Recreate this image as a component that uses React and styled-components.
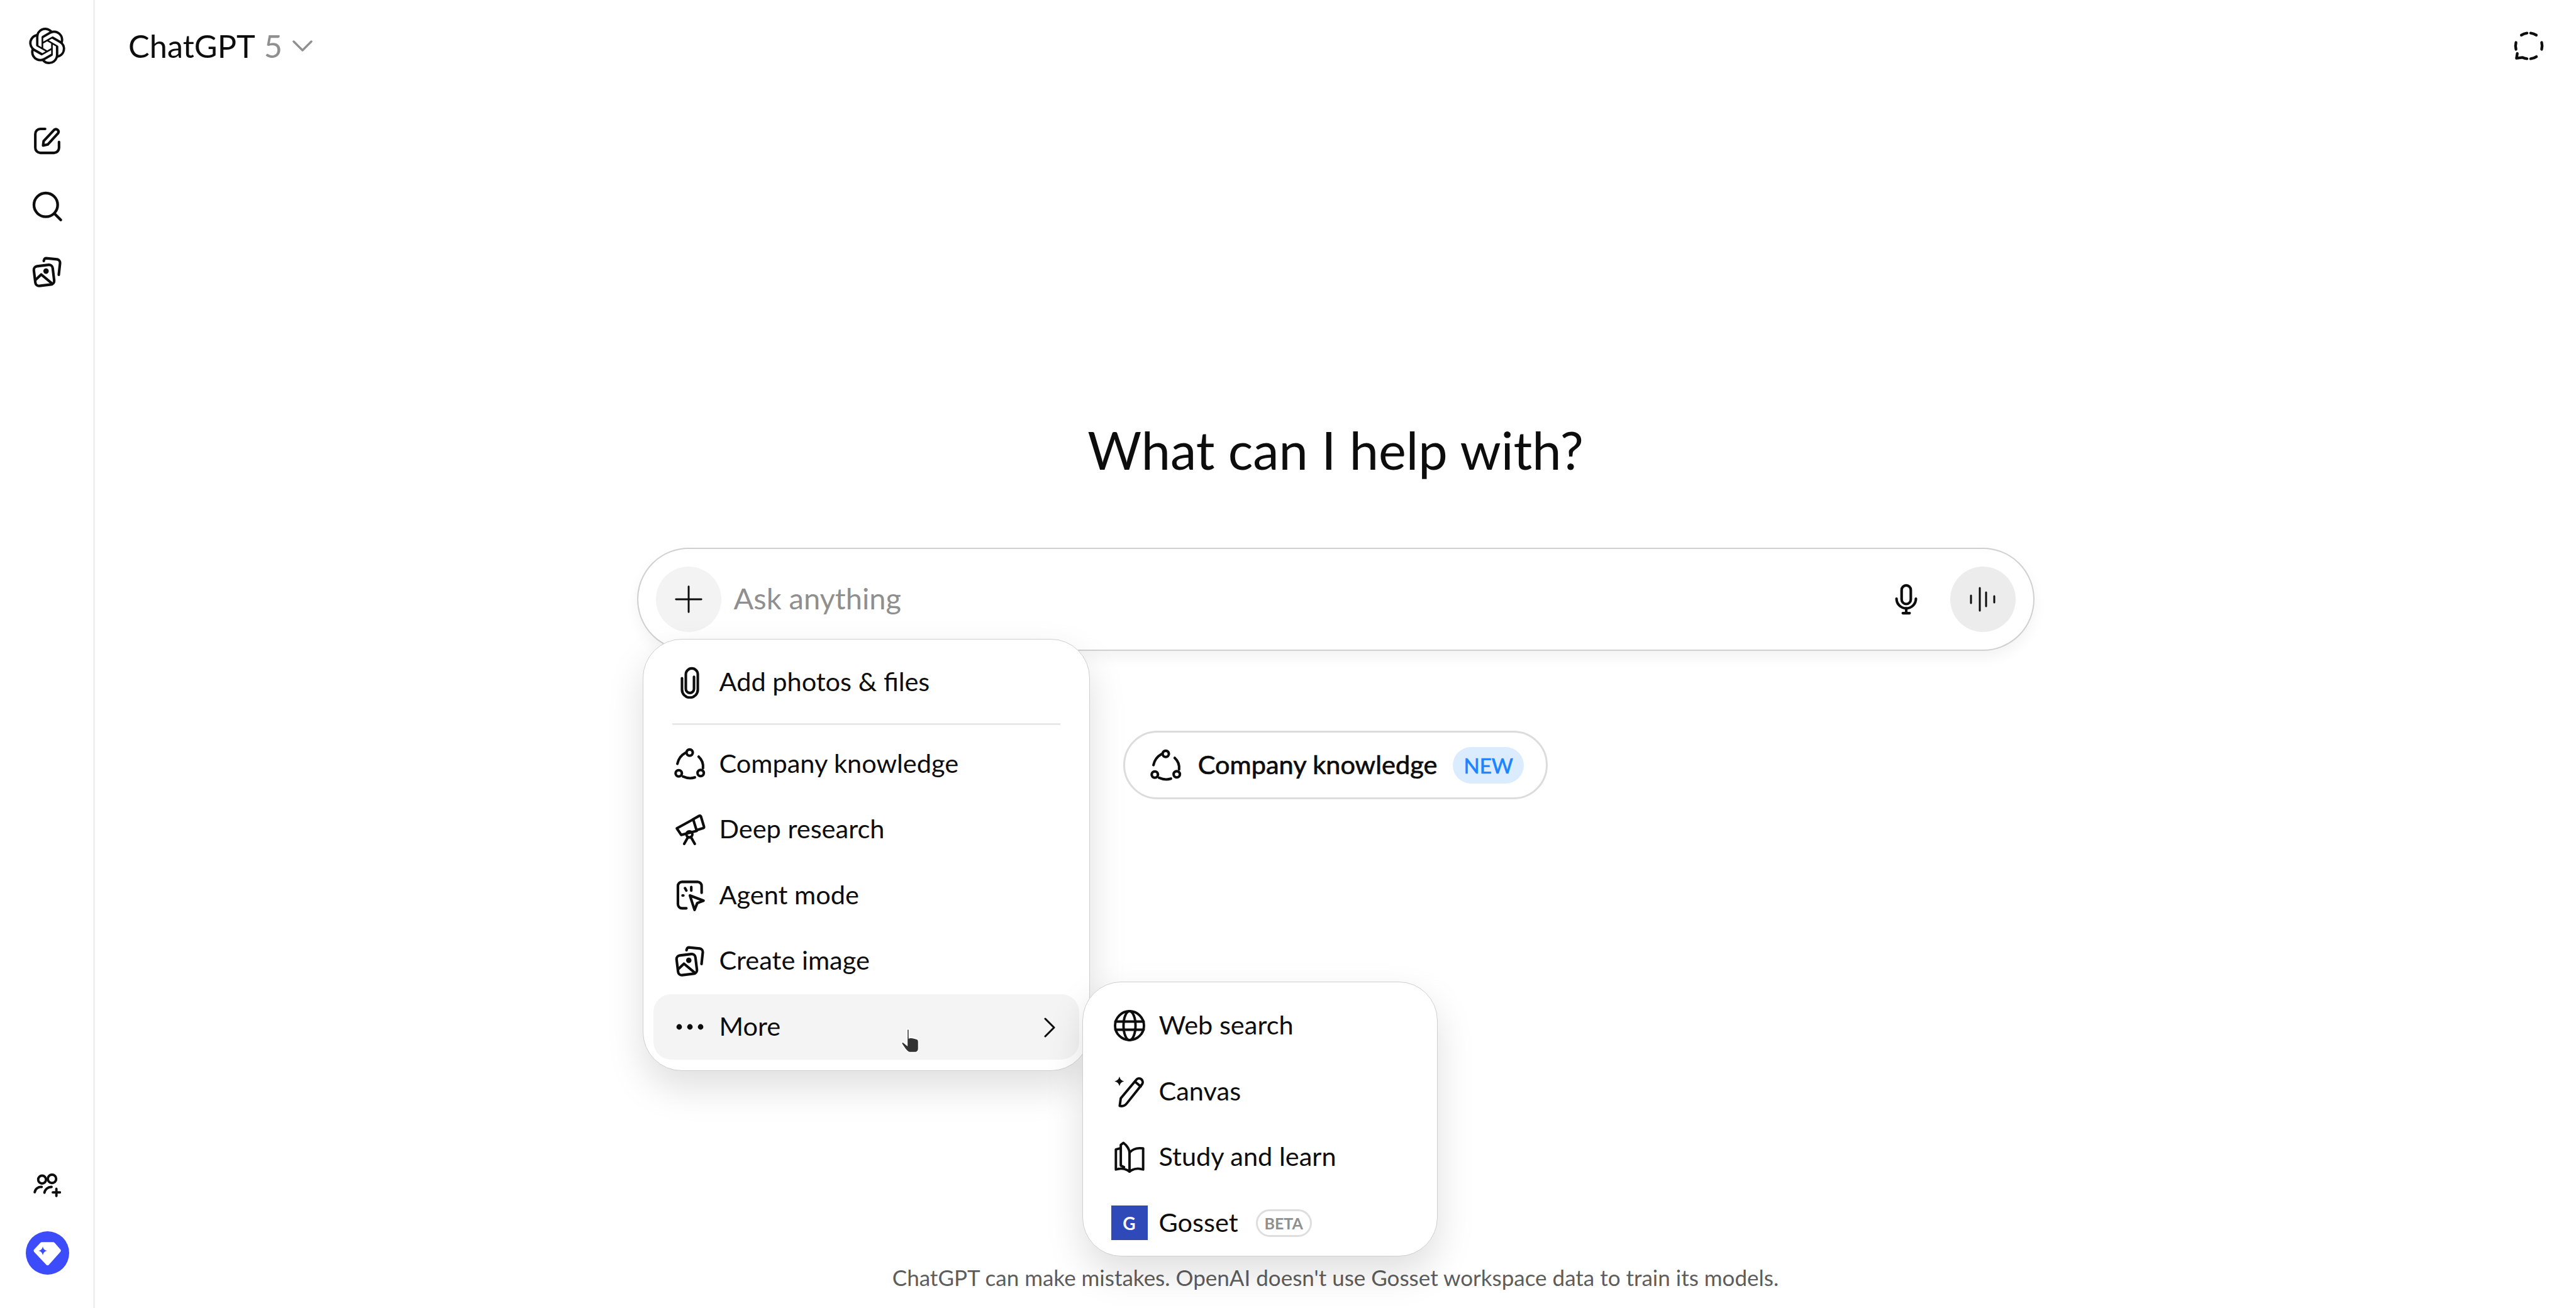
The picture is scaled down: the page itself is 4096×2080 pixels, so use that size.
import React from 'react';
import styled, { createGlobalStyle } from 'styled-components';
import { SiOpenai } from 'react-icons/si';

const GlobalStyle = createGlobalStyle`
  html, body { margin: 0; padding: 0; background: #fff; }
  * { box-sizing: border-box; }
  body { font-family: "Lato", "Noto Sans", sans-serif; color: #0d0d0d; }
`;

const Page = styled.div`
  display: flex;
  width: 4096px;
  height: 2080px;
  overflow: hidden;
  background: #fff;
`;

const Sidebar = styled.aside`
  display: flex;
  flex-direction: column;
  align-items: center;
  width: 151px;
  flex-shrink: 0;
  border-right: 3px solid #f0f0f0;
  padding: 0 0 53px 2px;
`;

const LogoRow = styled.div`
  display: flex;
  align-items: center;
  justify-content: center;
  height: 146px;
  margin-bottom: 26px;
`;

const NavButton = styled.div`
  display: flex;
  align-items: center;
  justify-content: center;
  width: 104px;
  height: 104px;
`;

const SidebarBottom = styled.div`
  display: flex;
  flex-direction: column;
  align-items: center;
  gap: 50px;
  margin-top: auto;
`;

const Main = styled.main`
  display: flex;
  flex-direction: column;
  flex: 1;
  min-width: 0;
`;

const Header = styled.header`
  display: flex;
  align-items: center;
  justify-content: space-between;
  height: 146px;
  padding: 0 50px 0 53px;
  flex-shrink: 0;
`;

const ModelButton = styled.div`
  display: flex;
  align-items: center;
  font-size: 50.5px;
  line-height: 60px;
`;

const ModelVersion = styled.span`
  color: #8f8f8f;
  margin-left: 14px;
`;

const Chevron = styled.svg`
  margin-left: 16px;
  color: #8f8f8f;
`;

const Center = styled.section`
  display: flex;
  flex-direction: column;
  align-items: center;
  flex: 1;
  padding-top: 519px;
`;

const Heading = styled.h1`
  margin: 0 0 106px;
  font-size: 83px;
  line-height: 100px;
  font-weight: 400;
`;

const Composer = styled.div`
  position: relative;
  display: flex;
  align-items: center;
  width: 2222px;
  height: 164px;
  padding: 0 28px;
  border: 2px solid #d0d0d0;
  border-radius: 82px;
  background: #fff;
  box-shadow: 0 10px 22px rgba(0, 0, 0, 0.05);
`;

const RoundButton = styled.div`
  display: flex;
  align-items: center;
  justify-content: center;
  width: 104px;
  height: 104px;
  border-radius: 50%;
  flex-shrink: 0;
  background: ${(p) => p.$bg};
`;

const Placeholder = styled.div`
  flex: 1;
  margin-left: 20px;
  padding-bottom: 4px;
  font-size: 47px;
  color: #8f8f8f;
`;

const MicSlot = styled.div`
  display: flex;
  justify-content: center;
  width: 52px;
  margin-right: 44px;
`;

const Menu = styled.div`
  position: absolute;
  left: 7px;
  top: 143px;
  z-index: 3;
  width: 711px;
  height: 687px;
  padding: 16px 16px 16px;
  border: 1.5px solid #cfcfcf;
  border-radius: 62px;
  background: #fff;
  box-shadow: 0 26px 60px rgba(0, 0, 0, 0.13);
`;

const SubMenu = styled(Menu)`
  left: 698px;
  top: 544px;
  z-index: 4;
  width: 565px;
  height: 437px;
  padding: 17px 16px;
`;

const MenuRow = styled.div`
  position: relative;
  display: flex;
  align-items: center;
  gap: 21px;
  height: 104.5px;
  padding-left: 32px;
  padding-bottom: 4px;
  border-radius: 28px;
  font-size: 41.5px;
  background: ${(p) => (p.$active ? '#f4f4f4' : 'transparent')};
`;

const IconBox = styled.span`
  display: flex;
  align-items: center;
  justify-content: center;
  width: 52px;
  height: 52px;
  margin-top: 4px;
  flex-shrink: 0;
`;

const Divider = styled.div`
  height: 3px;
  margin: 12px 30px 10px;
  background: #e8e8e8;
`;

const RowArrow = styled.svg`
  position: absolute;
  right: 36px;
  top: 37px;
`;

const HandCursor = styled.svg`
  position: absolute;
  left: 392px;
  top: 54px;
`;

const GossetMark = styled.span`
  display: flex;
  align-items: center;
  justify-content: center;
  width: 58px;
  height: 55px;
  margin: 0 -3px;
  flex-shrink: 0;
  background: #2f4ab8;
  color: #fff;
  font-size: 28px;
  font-weight: 700;
`;

const BetaTag = styled.span`
  display: flex;
  align-items: center;
  justify-content: center;
  width: 89px;
  height: 44px;
  margin-left: 7px;
  margin-top: 4px;
  border: 3px solid #dedede;
  border-radius: 22px;
  color: #8f8f8f;
  font-size: 25px;
  font-weight: 700;
`;

const Chip = styled.div`
  display: flex;
  align-items: center;
  height: 109px;
  margin-top: 127px;
  padding: 0 35px 0 39px;
  border: 3px solid #dcdcdc;
  border-radius: 55px;
  font-size: 41.5px;
  -webkit-text-stroke: 0.7px currentColor;
`;

const ChipLabel = styled.span`
  margin-left: 25px;
  padding-bottom: 4px;
`;

const NewBadge = styled.span`
  display: flex;
  align-items: center;
  justify-content: center;
  width: 113px;
  height: 58px;
  margin-left: 25px;
  border-radius: 29px;
  background: #dbecff;
  color: #1a85ff;
  font-size: 33px;
`;

const Footer = styled.footer`
  height: 69px;
  padding-bottom: 29px;
  font-size: 35px;
  line-height: 40px;
  color: #5d5d5d;
  text-align: center;
  flex-shrink: 0;
`;

const Line = styled.svg`
  display: block;
  fill: none;
  stroke: currentColor;
  stroke-width: ${(p) => p.$w || 2};
  stroke-linecap: round;
  stroke-linejoin: round;
  flex-shrink: 0;
`;

const Stroke = ({ size = 52, w, box = 24, children }) => (
  <Line width={size} height={size} viewBox={`0 0 ${box} ${box}`} $w={w}>
    {children}
  </Line>
);

const EditIcon = () => (
  <Stroke size={52} w={1.9}>
    <path d="M10.5 3.2H7A3.7 3.7 0 0 0 3.3 7v10A3.7 3.7 0 0 0 7 20.8h10a3.7 3.7 0 0 0 3.7-3.7v-4.3" />
    <path d="M9 15.4l.4-3.2 7.8-8.3a1.9 1.9 0 0 1 2.8 2.5l-7.6 8.3z" />
  </Stroke>
);

const SearchIcon = () => (
  <Stroke size={52} w={2}>
    <circle cx="11" cy="11" r="8.7" />
    <path d="M17.4 17.4L22 22" />
  </Stroke>
);

const ImagesIcon = ({ size = 54 }) => (
  <Stroke size={size} w={1.85}>
    <path d="M9.6 4.4l.2-.7a1.6 1.6 0 0 1 1.5-1.2l7.7.8a2.5 2.5 0 0 1 2.1 2.7l-.9 8.2" />
    <rect x="3" y="7.6" width="13.4" height="14" rx="2.6" transform="rotate(-7 10 14)" />
    <circle cx="11.2" cy="11.6" r="1" fill="currentColor" />
    <path d="M3.6 18l4.2-4 7.4 6.2" />
  </Stroke>
);

const PeoplePlusIcon = () => (
  <Stroke size={44} w={2.1}>
    <circle cx="7.6" cy="6.4" r="3.4" />
    <circle cx="16.2" cy="5.8" r="3.6" />
    <path d="M1.2 17.4a5.5 5.5 0 0 1 6-4.6" />
    <path d="M9.6 17.8a6 6 0 0 1 6.2-5" />
    <path d="M20 14.4v6.2M16.9 17.5h6.2" />
  </Stroke>
);

const DiamondBadge = () => (
  <svg width="69" height="69" viewBox="0 0 24 24">
    <circle cx="12" cy="12" r="12" fill="#3d4cfb" />
    <path
      d="M9 6h6.1q.5 0 .9.4l3.2 3.7q.5.6 0 1.2l-6.5 7.3q-.7.5-1.3 0L4.6 11.4q-.6-.7 0-1.3L8 6.4Q8.4 6 9 6z"
      fill="#fff"
    />
    <path d="M9.4 8.4q.4 2 2.4 2.4q-2 .4-2.4 2.4q-.4-2-2.4-2.4q2-.4 2.4-2.4z" fill="#3d4cfb" />
  </svg>
);

const ChatDashIcon = () => (
  <Stroke size={50} w={2.1}>
    <path d="M10.6 2.2a10 10 0 0 0-4.3 1.6" />
    <path d="M13.4 2.2a10 10 0 0 1 4.3 1.6" />
    <path d="M21.8 9.4a10 10 0 0 1 0 5.2" />
    <path d="M17.8 20.2a10 10 0 0 1-4.4 1.6" />
    <path d="M2.2 9.4a10 10 0 0 0 0 5.2" />
    <path d="M10.6 21.8a10 10 0 0 1-3.6-1L2.6 21.4l.6-3.6" />
  </Stroke>
);

const PlusIcon = () => (
  <Stroke size={44} w={1.6}>
    <path d="M12 1v22M1 12h22" />
  </Stroke>
);

const MicIcon = () => (
  <Stroke size={50} w={2}>
    <rect x="8.5" y="1.4" width="7" height="14.2" rx="3.5" />
    <path d="M4.6 11.5a7.4 7.4 0 0 0 14.8 0" />
    <path d="M12 19v3.4M9.4 22.6h5.2" />
  </Stroke>
);

const WaveIcon = () => (
  <Stroke size={48} w={3} box={48}>
    <path d="M5 18v12M19 6v36M29 13v22M42 19v10" />
  </Stroke>
);

const ClipIcon = () => (
  <Stroke size={52} w={1.9}>
    <path d="M6.2 9v8.4a5.8 5.8 0 0 0 11.6 0V6.2a4.4 4.4 0 0 0-8.8 0v10.6a3 3 0 0 0 6 0V8" />
  </Stroke>
);

const KnowledgeIcon = () => (
  <Stroke size={52} w={1.9}>
    <circle cx="11.8" cy="3.6" r="2.3" />
    <circle cx="3.8" cy="18.8" r="2.3" />
    <circle cx="19.9" cy="18.6" r="2.3" />
    <path d="M8.6 3.8a12 12 0 0 0-5.8 8" />
    <path d="M18.4 6.6a10 10 0 0 1 3.2 8.4" />
    <path d="M7 21.2q4.5 2 8.6.6" />
  </Stroke>
);

const TelescopeIcon = () => (
  <Stroke size={52} w={1.9}>
    <path d="M2.4 11.2l12-6.6 2.6 8.4-11.4 3-3.2-4.8z" />
    <path d="M14.2 4.6l4.6-2.6a1 1 0 0 1 1.3.5l2.2 7.4a1 1 0 0 1-.7 1.2l-4.6 1.4" />
    <circle cx="11.6" cy="15.6" r="2.2" />
    <path d="M10.6 17.6l-2.8 5M12.8 17.6l2.8 5" />
  </Stroke>
);

const AgentIcon = () => (
  <Stroke size={52} w={1.9}>
    <path d="M9.4 21.4H6.2a3 3 0 0 1-3-3V5a3 3 0 0 1 3-3h11.4a3 3 0 0 1 3 3v5" />
    <path d="M12 12l10 3.8-4.6 1.8-2 5z" />
    <path d="M8.4 6.6l1 1.8M13 5.8v2.6M6.6 12h.6" />
  </Stroke>
);

const DotsIcon = () => (
  <svg width="44" height="10" viewBox="0 0 44 10" fill="currentColor">
    <circle cx="5" cy="5" r="4.4" />
    <circle cx="22" cy="5" r="4.4" />
    <circle cx="39" cy="5" r="4.4" />
  </svg>
);

const GlobeIcon = () => (
  <Stroke size={52} w={1.8}>
    <circle cx="12" cy="12" r="10.6" />
    <path d="M1.6 9h20.8M1.6 15h20.8" />
    <ellipse cx="12" cy="12" rx="4.4" ry="10.6" />
  </Stroke>
);

const CanvasIcon = () => (
  <Stroke size={52} w={1.8}>
    <path d="M4.8 22.4l.8-5.6L17 3.2a2.6 2.6 0 0 1 3.8-.2 2.8 2.8 0 0 1 .4 3.6L10 20.6a5 5 0 0 1-5.2 1.8z" />
    <path d="M16 4.6l4.2 3.6" />
    <path d="M4.6.8q.6 3 3.4 3.6q-2.8.6-3.4 3.6Q4 5 1 4.4Q4 3.8 4.6.8z" fill="currentColor" stroke="none" />
  </Stroke>
);

const BookIcon = () => (
  <Stroke size={52} w={1.8}>
    <path d="M12 22.6l-1.6-1a10 10 0 0 0-7-.8l-1.4.3V6.4l2.6-.7" />
    <path d="M12 22.6l1.6-1a10 10 0 0 1 7-.8l1.4.3V5.6l-2-.1a10 10 0 0 0-8 3.2" />
    <path d="M12 22.6V8.8c0-2-1.6-5.2-4.4-7.2l-2 1.4v15.2l2.4 1.2" />
  </Stroke>
);

const primaryItems = [
  { label: 'Company knowledge', icon: <KnowledgeIcon /> },
  { label: 'Deep research', icon: <TelescopeIcon /> },
  { label: 'Agent mode', icon: <AgentIcon /> },
  { label: 'Create image', icon: <ImagesIcon /> },
];

const moreItems = [
  { label: 'Web search', icon: <GlobeIcon /> },
  { label: 'Canvas', icon: <CanvasIcon /> },
  { label: 'Study and learn', icon: <BookIcon /> },
];

const App = () => {
  return (
    <Page>
      <GlobalStyle />
      <Sidebar>
        <LogoRow>
          <SiOpenai size={58} />
        </LogoRow>
        <NavButton><EditIcon /></NavButton>
        <NavButton><SearchIcon /></NavButton>
        <NavButton><ImagesIcon /></NavButton>
        <SidebarBottom>
          <PeoplePlusIcon />
          <DiamondBadge />
        </SidebarBottom>
      </Sidebar>
      <Main>
        <Header>
          <ModelButton>
            ChatGPT<ModelVersion>5</ModelVersion>
            <Chevron width="32" height="18" viewBox="0 0 32 18" fill="none" stroke="currentColor" strokeWidth="3.4" strokeLinecap="round" strokeLinejoin="round">
              <path d="M2 2l14 14L30 2" />
            </Chevron>
          </ModelButton>
          <ChatDashIcon />
        </Header>
        <Center>
          <Heading>What can I help with?</Heading>
          <Composer>
            <RoundButton $bg="#f3f3f3"><PlusIcon /></RoundButton>
            <Placeholder>Ask anything</Placeholder>
            <MicSlot><MicIcon /></MicSlot>
            <RoundButton $bg="#ececec"><WaveIcon /></RoundButton>
            <Menu>
              <MenuRow>
                <IconBox><ClipIcon /></IconBox>
                Add photos &amp; files
              </MenuRow>
              <Divider />
              {primaryItems.map((item) => (
                <MenuRow key={item.label}>
                  <IconBox>{item.icon}</IconBox>
                  {item.label}
                </MenuRow>
              ))}
              <MenuRow $active>
                <IconBox><DotsIcon /></IconBox>
                More
                <RowArrow width="22" height="32" viewBox="0 0 22 32" fill="none" stroke="currentColor" strokeWidth="3" strokeLinecap="round" strokeLinejoin="round">
                  <path d="M4 2l14 14L4 30" />
                </RowArrow>
                <HandCursor width="38" height="42" viewBox="0 0 34 38">
                  <path
                    d="M10 2.5c0-1.8 3-1.8 3 0V14l2-.6 3 .6 3 .6 3 .8c2 .6 2.6 2 2.6 4v10c0 3-2 5.6-5 5.6H14c-3 0-5-3-7-5.6L2.6 23c-1.4-2 .8-4 2.6-2.4l4.8 4z"
                    fill="#333"
                    stroke="#fff"
                    strokeWidth="1.6"
                  />
                </HandCursor>
              </MenuRow>
              <SubMenu>
                {moreItems.map((item) => (
                  <MenuRow key={item.label}>
                    <IconBox>{item.icon}</IconBox>
                    {item.label}
                  </MenuRow>
                ))}
                <MenuRow>
                  <IconBox><GossetMark>G</GossetMark></IconBox>
                  Gosset
                  <BetaTag>BETA</BetaTag>
                </MenuRow>
              </SubMenu>
            </Menu>
          </Composer>
          <Chip>
            <KnowledgeIcon />
            <ChipLabel>Company knowledge</ChipLabel>
            <NewBadge>NEW</NewBadge>
          </Chip>
        </Center>
        <Footer>ChatGPT can make mistakes. OpenAI doesn't use Gosset workspace data to train its models.</Footer>
      </Main>
    </Page>
  );
};

export default App;
